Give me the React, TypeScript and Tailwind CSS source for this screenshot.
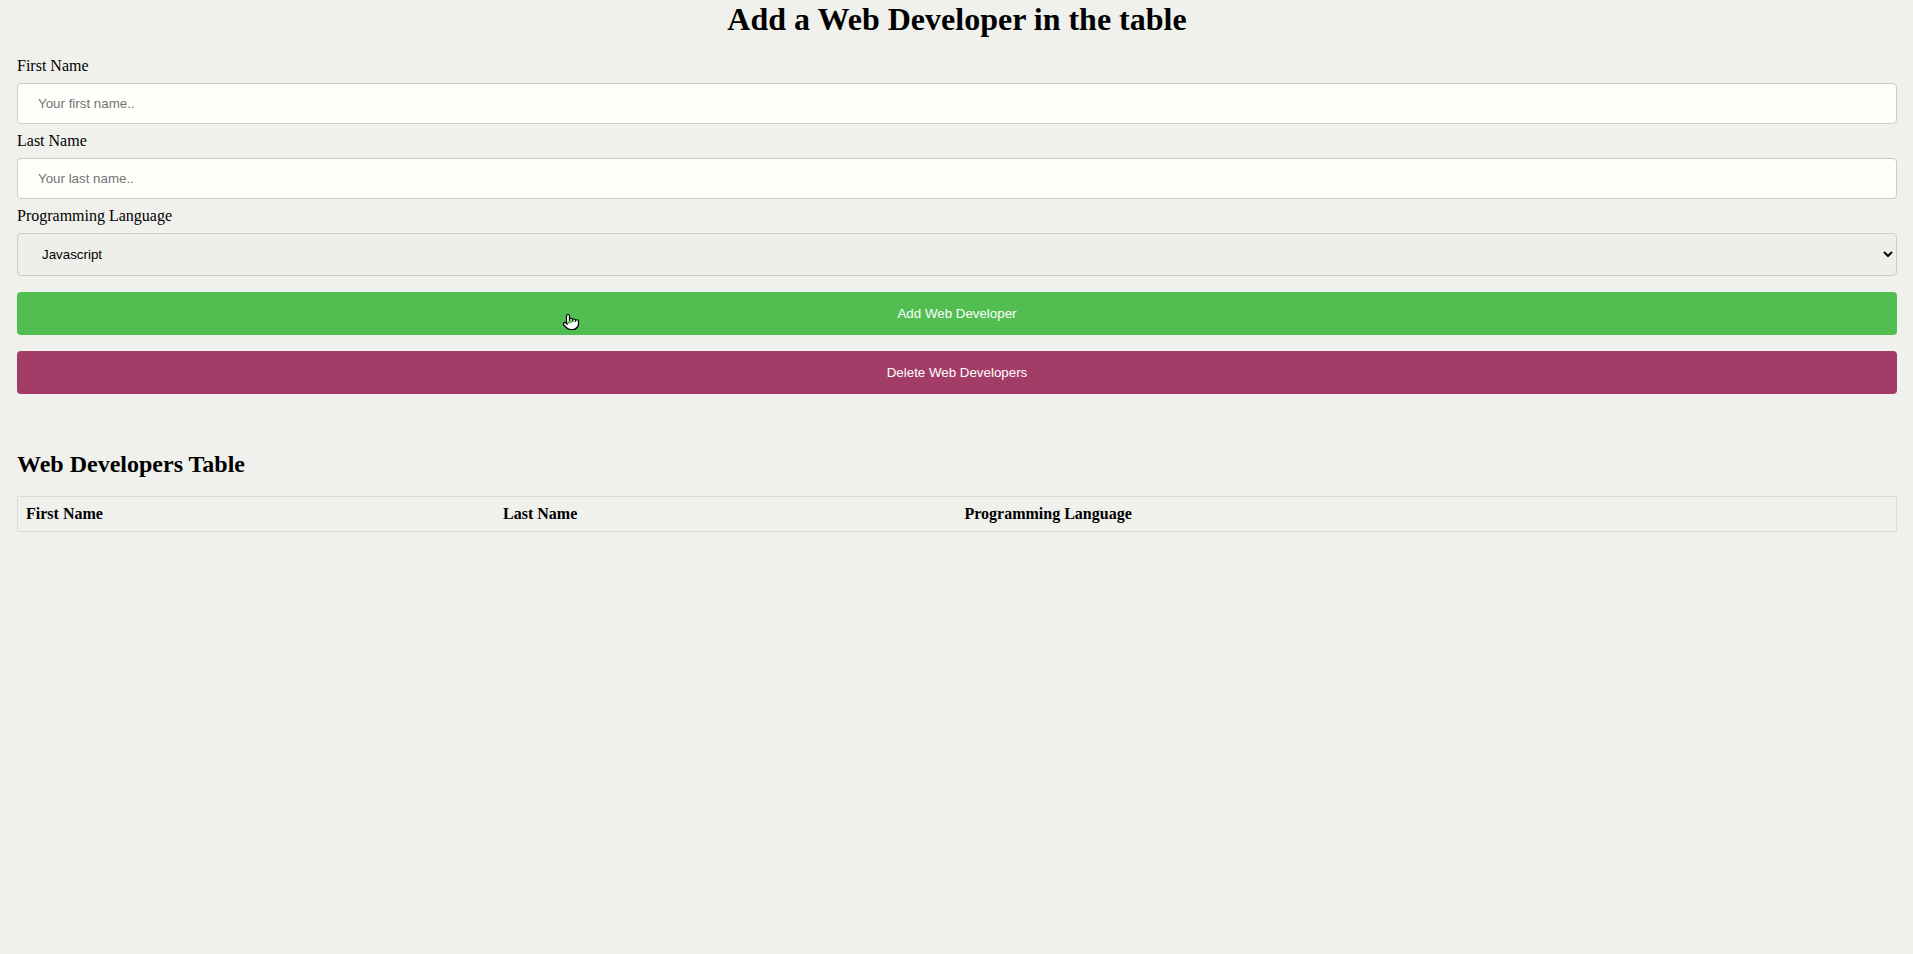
import { Pointer } from "lucide-react";

const serif = "font-['Liberation_Serif','Times_New_Roman',serif]";
const sans = "font-['Liberation_Sans',Arial,sans-serif]";

export default function App() {
  return (
    <div className={`min-h-[954px] bg-[#f0f0ed] pl-[17px] pr-[16px] pt-[1px] text-black ${serif}`}>
      <h1 className="text-center text-[32px] font-bold leading-[37px]">
        Add a Web Developer in the table
      </h1>

      <form className="mt-[19px]" onSubmit={(e) => e.preventDefault()}>
        <label className="block text-base leading-[18px]">First Name</label>
        <input
          type="text"
          placeholder="Your first name.."
          className={`my-2 inline-block h-[41px] w-full rounded border border-[#ccc] bg-[#fefffb] px-5 text-[13.33px] placeholder:text-[#757575] ${sans}`}
        />

        <label className="block text-base leading-[18px]">Last Name</label>
        <input
          type="text"
          placeholder="Your last name.."
          className={`my-2 inline-block h-[41px] w-full rounded border border-[#ccc] bg-[#fefffb] px-5 text-[13.33px] placeholder:text-[#757575] ${sans}`}
        />

        <label className="block text-base leading-[18px]">Programming Language</label>
        <select
          defaultValue="Javascript"
          className={`my-2 inline-block h-[43px] w-full rounded border border-[#ccc] bg-[#eeeeea] px-5 text-[13.33px] ${sans}`}
        >
          <option>Javascript</option>
          <option>Python</option>
          <option>PHP</option>
          <option>Ruby</option>
        </select>

        <button
          type="submit"
          className={`relative my-2 inline-block h-[43px] w-full rounded bg-[#52be51] text-[13.33px] text-white ${sans}`}
        >
          Add Web Developer
          <Pointer
            size={18}
            strokeWidth={1.6}
            className="absolute left-[545px] top-[21px] fill-white text-black"
          />
        </button>
        <button
          type="button"
          className={`my-2 inline-block h-[43px] w-full rounded bg-[#a33d68] text-[13.33px] text-white ${sans}`}
        >
          Delete Web Developers
        </button>
      </form>

      <h2 className="mt-[48px] text-2xl font-bold leading-[28px]">Web Developers Table</h2>

      <table className="mt-[18px] w-full border-collapse border border-[#dcdcd8]">
        <thead>
          <tr>
            <th className="p-2 text-left text-base font-bold leading-[18px]">First Name</th>
            <th className="p-2 text-left text-base font-bold leading-[18px]">Last Name</th>
            <th className="p-2 text-left text-base font-bold leading-[18px]">Programming Language</th>
          </tr>
        </thead>
        <tbody></tbody>
      </table>
    </div>
  );
}
